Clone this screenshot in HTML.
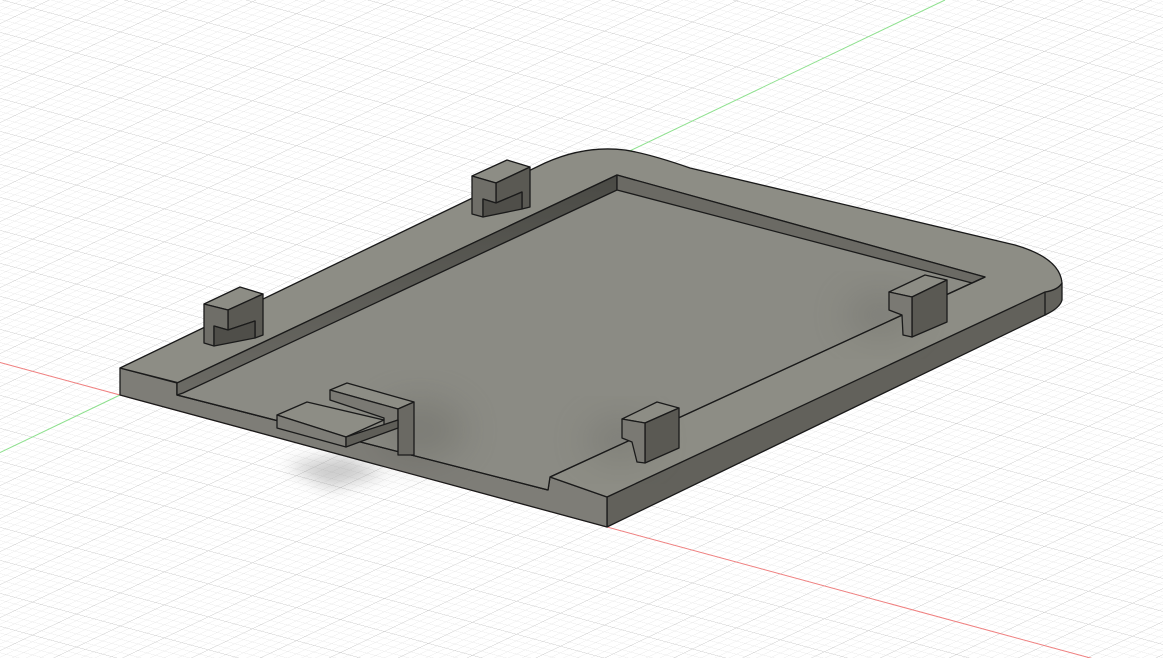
<!DOCTYPE html>
<html><head><meta charset="utf-8"><style>html,body{margin:0;padding:0;background:#fff;overflow:hidden}svg{display:block}</style></head>
<body>
<svg width="1163" height="658" viewBox="0 0 1163 658" xmlns="http://www.w3.org/2000/svg">
<defs>
<pattern id="minor" patternUnits="userSpaceOnUse" width="8.8" height="8.8" patternTransform="matrix(1,0.271,1,-0.479,120,395)">
<path d="M0 0V8.8M0 0H8.8" stroke="#e3e3e3" stroke-width="0.9" fill="none"/>
</pattern>
<pattern id="major" patternUnits="userSpaceOnUse" width="44" height="44" patternTransform="matrix(1,0.271,1,-0.479,120,395)">
<path d="M0 0V44M0 0H44" stroke="#c0c0c0" stroke-width="0.9" fill="none"/>
</pattern>
<filter id="bl" x="-50%" y="-50%" width="200%" height="200%"><feGaussianBlur stdDeviation="8"/></filter>
<filter id="bl2" x="-50%" y="-50%" width="200%" height="200%"><feGaussianBlur stdDeviation="18"/></filter>
<linearGradient id="wall" x1="0" y1="0" x2="0" y2="1"><stop offset="0" stop-color="#4a4a45"/><stop offset="1" stop-color="#6c6b65"/></linearGradient>
</defs>
<rect width="1163" height="658" fill="#fff"/>
<rect width="1163" height="658" fill="url(#minor)"/>
<rect width="1163" height="658" fill="url(#major)"/>
<line x1="0" y1="362.5" x2="1163" y2="677.7" stroke="#f08080" stroke-width="1"/>
<line x1="120" y1="395" x2="945" y2="0" stroke="#8ee08e" stroke-width="1"/>
<line x1="120" y1="395" x2="0" y2="452.5" stroke="#8ee08e" stroke-width="1"/>
<path d="M285 465 L345 455 L385 475 L330 488 Z" fill="#999" opacity="0.5" filter="url(#bl)"/>

<g stroke="#1a1a1a" stroke-width="1.3" stroke-linejoin="round">
<path d="M607 497 L1045 290 Q1058 286 1062 283 L1062 300 Q1060 308 1045 315 L607 527 Z" fill="#62615b"/>
<line x1="1045" y1="290" x2="1045" y2="315"/>
<path d="M120 368 L177 383 L177 395 L548 490 L550 477 L607 497 L607 527 L120 395 Z" fill="#7e7d77"/>
<path d="M120 368 L545 163 Q585 145 625 150 Q650 154 690 168 L1015 245 Q1060 258 1062 283 Q1058 290 1045 292 L607 497 L550 477 Z" fill="#8d8d85"/>
<path d="M177 383 L617 175 L985 277 L550 477 L548 490 L177 395 Z" fill="#8b8b84"/>
</g>
<ellipse cx="420" cy="430" rx="45" ry="30" fill="#5a5a55" opacity="0.3" filter="url(#bl2)"/>
<ellipse cx="620" cy="440" rx="35" ry="22" fill="#5a5a55" opacity="0.25" filter="url(#bl2)"/>
<ellipse cx="880" cy="315" rx="35" ry="22" fill="#5a5a55" opacity="0.25" filter="url(#bl2)"/>
<g stroke="#1a1a1a" stroke-width="1.3" stroke-linejoin="round">
<path d="M177 383 L617 175 L617 190 L183 393 L177 395 Z" fill="url(#wall)"/>
<path d="M617 175 L985 277 L972 283 L617 190 Z" fill="#6b6a64"/>
<line x1="177" y1="395" x2="548" y2="490" />
<line x1="550" y1="477" x2="985" y2="277"/>

<path d="M472 176 L507 160 L530 167 L496 183 Z" fill="#8d8d85"/>
<path d="M496 183 L530 167 L530 207 L522 209 L522 192 L496 203 Z" fill="#5a5953"/>
<path d="M472 176 L496 183 L496 203 L483 199 L483 217 L472 214 Z" fill="#6f6e68"/>
<path d="M483 199 L496 203 L522 192 L522 209 L483 217 Z" fill="#4f4e49"/>
<path d="M204 304 L240 287 L263 294 L228 310 Z" fill="#8d8d85"/>
<path d="M228 310 L263 294 L263 335 L255 338 L255 321 L228 330 Z" fill="#5a5953"/>
<path d="M204 304 L228 310 L228 330 L214 326 L214 346 L204 343 Z" fill="#6f6e68"/>
<path d="M214 326 L228 330 L255 321 L255 338 L214 346 Z" fill="#4f4e49"/>

<path d="M330 390 L347 383 L414 402 L398 409 Z" fill="#8d8d85"/>
<path d="M330 390 L398 409 L398 420 L384 425 L384 418 L330 400 Z" fill="#7a7973"/>
<path d="M398 409 L414 402 L414 455 L398 455 Z" fill="#6a6963"/>
<path d="M277 415 L307 402 L384 420 L346 437 Z" fill="#8d8d85"/>
<path d="M277 415 L346 437 L346 447 L277 428 Z" fill="#7e7d77"/>
<path d="M346 437 L398 420 L398 428 L346 447 Z" fill="#5f5e58"/>

<path d="M889 292 L925 275 L947 280 L912 297 Z" fill="#8d8d85"/>
<path d="M912 297 L947 280 L947 322 L912 337 Z" fill="#5a5953"/>
<path d="M889 292 L912 297 L912 337 L903 335 L902 315 L889 310 Z" fill="#7a7973"/>
<path d="M622 419 L657 402 L679 408 L645 423 Z" fill="#8d8d85"/>
<path d="M645 423 L679 408 L679 448 L645 463 Z" fill="#5a5953"/>
<path d="M622 419 L645 423 L645 463 L637 462 L632 442 L622 438 Z" fill="#7a7973"/>
</g>
</svg>
</body></html>
